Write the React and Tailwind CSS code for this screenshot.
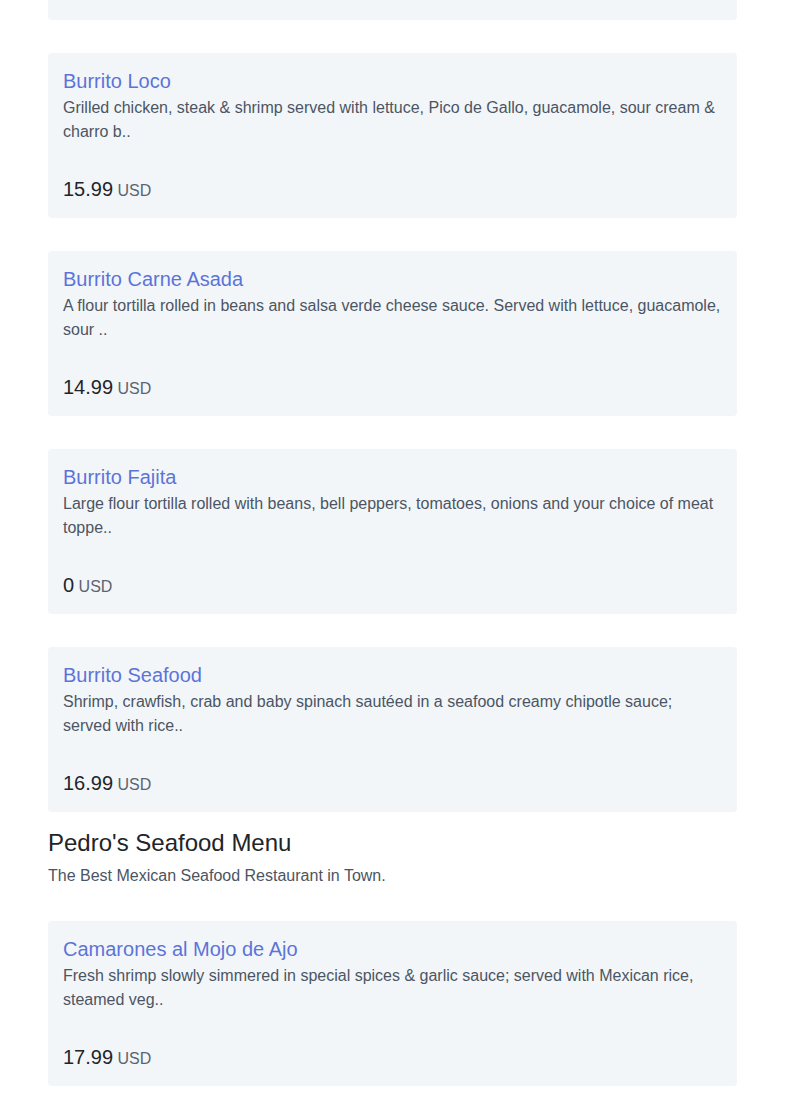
const items = [
    {
        name: 'Burrito Loco',
        description: 'Grilled chicken, steak & shrimp served with lettuce, Pico de Gallo, guacamole, sour cream & charro b..',
        price: '15.99',
    },
    {
        name: 'Burrito Carne Asada',
        description: 'A flour tortilla rolled in beans and salsa verde cheese sauce. Served with lettuce, guacamole, sour ..',
        price: '14.99',
    },
    {
        name: 'Burrito Fajita',
        description: 'Large flour tortilla rolled with beans, bell peppers, tomatoes, onions and your choice of meat toppe..',
        price: '0',
    },
    {
        name: 'Burrito Seafood',
        description: 'Shrimp, crawfish, crab and baby spinach sautéed in a seafood creamy chipotle sauce; served with rice..',
        price: '16.99',
    },
];

const seafood = [
    {
        name: 'Camarones al Mojo de Ajo',
        description: 'Fresh shrimp slowly simmered in special spices & garlic sauce; served with Mexican rice, steamed veg..',
        price: '17.99',
    },
];

// One menu entry card
function MenuCard({ item }) {
    return (
        <div className="bg-[#f3f6f9] rounded-[4px] px-[15px] pt-4 pb-[14px] h-[165px]">
            <h5 className="text-[20px] leading-[24px] text-[#5c74d8]">{item.name}</h5>
            <p className="mt-[3px] text-[16px] leading-[24px] text-[#4b5563] h-[48px] overflow-hidden">
                {item.description}
            </p>
            <div className="mt-[30px] leading-[30px]">
                <span className="text-[20px] text-[#212529]">{item.price}</span>{' '}
                <span className="text-[16px] text-[#5b6470]">USD</span>
            </div>
        </div>
    );
}

export default function App() {
    return (
        <div className="bg-white min-h-[1104px] overflow-hidden font-['Liberation_Sans',Arial,sans-serif]">
            <div className="mx-[48px] w-[689px]">
                <div className="flex flex-col gap-[33px]">
                    {/* bottom of the previous card, scrolled off the top */}
                    <div className="bg-[#f3f6f9] rounded-b-[4px] h-[20px]" />
                    {items.map((item) => (
                        <MenuCard key={item.name} item={item} />
                    ))}
                </div>
                <h3 className="mt-[16px] text-[24px] leading-[29px] text-[#212529]">Pedro's Seafood Menu</h3>
                <p className="mt-[7px] text-[16px] leading-[24px] text-[#4b5563]">
                    The Best Mexican Seafood Restaurant in Town.
                </p>
                <div className="mt-[33px] flex flex-col gap-[33px]">
                    {seafood.map((item) => (
                        <MenuCard key={item.name} item={item} />
                    ))}
                </div>
            </div>
        </div>
    );
}
